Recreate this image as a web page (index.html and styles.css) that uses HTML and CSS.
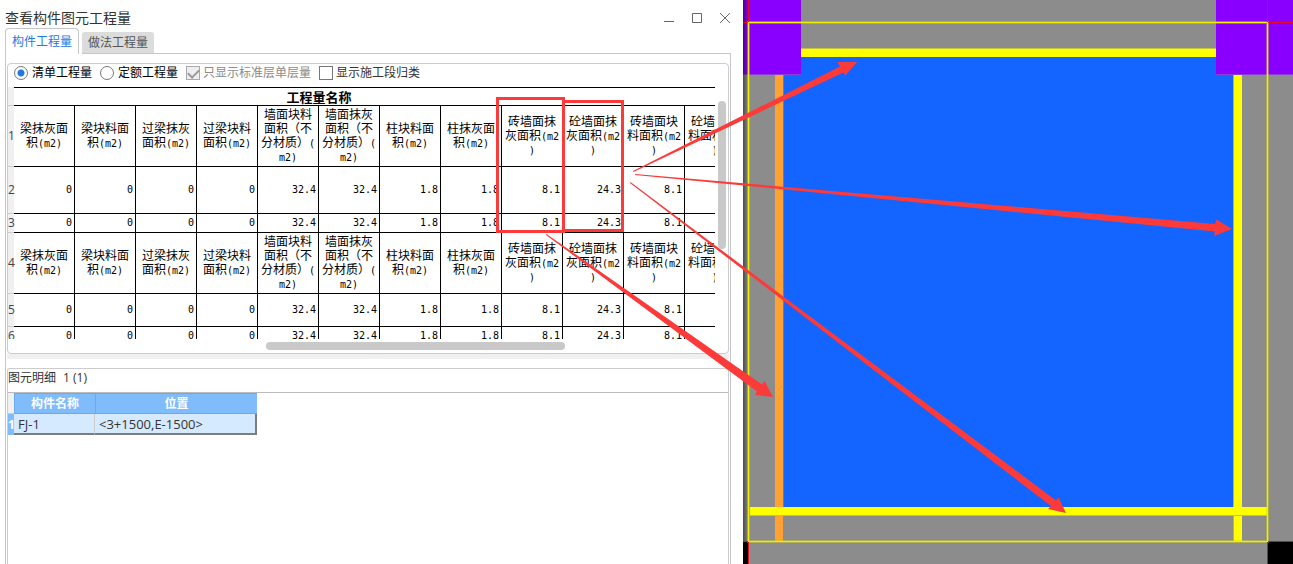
FILE: index.html
```html
<!DOCTYPE html>
<html lang="zh-CN">
<head>
<meta charset="utf-8">
<title>查看构件图元工程量</title>
<link rel="stylesheet" href="styles.css">
</head>
<body>
<main class="screen">
  <section class="dialog">
    <header class="titlebar">
      <h1 class="title">查看构件图元工程量</h1>
      <div class="window-buttons">
        <button class="window-button" aria-label="最小化"><svg width="12" height="12" viewBox="0 0 12 12"><path d="M1 9.500H11"/></svg></button>
        <button class="window-button" aria-label="最大化"><svg width="12" height="12" viewBox="0 0 12 12"><path d="M1.500 1.500H10.500V10.500H1.500Z"/></svg></button>
        <button class="window-button" aria-label="关闭"><svg width="12" height="12" viewBox="0 0 12 12"><path d="M1 1L11 11M11 1L1 11"/></svg></button>
      </div>
    </header>
    <nav class="tabs">
      <button class="tab tab-active">构件工程量</button>
      <button class="tab">做法工程量</button>
      <span class="tab-line"></span>
    </nav>
    <div class="panel">
      <div class="group">
        <div class="options">
          <label class="option option-on"><input type="radio" name="kind" checked>清单工程量</label>
          <label class="option option-on"><input type="radio" name="kind">定额工程量</label>
          <label class="option option-check option-off"><input type="checkbox" checked disabled>只显示标准层单层量</label>
          <label class="option option-check"><input type="checkbox">显示施工段归类</label>
        </div>
        <div class="grid">
          <div class="grid-view">
            <table class="quantities">
              <colgroup><col class="col-index"><col span="12" class="col-value"></colgroup>
              <tbody>
                <tr class="row-title"><th class="index"></th><th colspan="10" class="caption">工程量名称</th><th colspan="2" class="caption"></th></tr>
                <tr class="row-names">
                  <th class="index">1</th>
                  <th>梁抹灰面<br>积<span class="unit">(m2)</span></th>
                  <th>梁块料面<br>积<span class="unit">(m2)</span></th>
                  <th>过梁抹灰<br>面积<span class="unit">(m2)</span></th>
                  <th>过梁块料<br>面积<span class="unit">(m2)</span></th>
                  <th>墙面块料<br>面积（不<br>分材质）<span class="unit">(</span><br><span class="unit">m2)</span></th>
                  <th>墙面抹灰<br>面积（不<br>分材质）<span class="unit">(</span><br><span class="unit">m2)</span></th>
                  <th>柱块料面<br>积<span class="unit">(m2)</span></th>
                  <th>柱抹灰面<br>积<span class="unit">(m2)</span></th>
                  <th>砖墙面抹<br>灰面积<span class="unit">(m2</span><br><span class="unit">)</span></th>
                  <th>砼墙面抹<br>灰面积<span class="unit">(m2</span><br><span class="unit">)</span></th>
                  <th>砖墙面块<br>料面积<span class="unit">(m2</span><br><span class="unit">)</span></th>
                  <th>砼墙面块<br>料面积<span class="unit">(m2</span><br><span class="unit">)</span></th>
                </tr>
                <tr class="row-tall"><th class="index">2</th><td>0</td><td>0</td><td>0</td><td>0</td><td>32.4</td><td>32.4</td><td>1.8</td><td>1.8</td><td>8.1</td><td>24.3</td><td>8.1</td><td></td></tr>
                <tr class="row-short"><th class="index">3</th><td>0</td><td>0</td><td>0</td><td>0</td><td>32.4</td><td>32.4</td><td>1.8</td><td>1.8</td><td>8.1</td><td>24.3</td><td>8.1</td><td></td></tr>
                <tr class="row-names">
                  <th class="index">4</th>
                  <th>梁抹灰面<br>积<span class="unit">(m2)</span></th>
                  <th>梁块料面<br>积<span class="unit">(m2)</span></th>
                  <th>过梁抹灰<br>面积<span class="unit">(m2)</span></th>
                  <th>过梁块料<br>面积<span class="unit">(m2)</span></th>
                  <th>墙面块料<br>面积（不<br>分材质）<span class="unit">(</span><br><span class="unit">m2)</span></th>
                  <th>墙面抹灰<br>面积（不<br>分材质）<span class="unit">(</span><br><span class="unit">m2)</span></th>
                  <th>柱块料面<br>积<span class="unit">(m2)</span></th>
                  <th>柱抹灰面<br>积<span class="unit">(m2)</span></th>
                  <th>砖墙面抹<br>灰面积<span class="unit">(m2</span><br><span class="unit">)</span></th>
                  <th>砼墙面抹<br>灰面积<span class="unit">(m2</span><br><span class="unit">)</span></th>
                  <th>砖墙面块<br>料面积<span class="unit">(m2</span><br><span class="unit">)</span></th>
                  <th>砼墙面块<br>料面积<span class="unit">(m2</span><br><span class="unit">)</span></th>
                </tr>
                <tr class="row-medium"><th class="index">5</th><td>0</td><td>0</td><td>0</td><td>0</td><td>32.4</td><td>32.4</td><td>1.8</td><td>1.8</td><td>8.1</td><td>24.3</td><td>8.1</td><td></td></tr>
                <tr class="row-short"><th class="index">6</th><td>0</td><td>0</td><td>0</td><td>0</td><td>32.4</td><td>32.4</td><td>1.8</td><td>1.8</td><td>8.1</td><td>24.3</td><td>8.1</td><td></td></tr>
              </tbody>
            </table>
          </div>
          <div class="scroll-y"><div class="thumb-y"></div></div>
          <div class="scroll-x"><div class="thumb-x"></div></div>
        </div>
      </div>
      <div class="splitter"></div>
      <div class="details">
        <h2 class="details-title"><span>图元明细</span><span>1 (1)</span></h2>
        <table class="elements">
          <thead><tr><th class="corner"></th><th class="name">构件名称</th><th class="place">位置</th></tr></thead>
          <tbody><tr><th class="current">1</th><td>FJ-1</td><td>&lt;3+1500,E-1500&gt;</td></tr></tbody>
        </table>
      </div>
    </div>
  </section>
  <section class="plan">
    <svg class="plan-drawing" viewBox="743 0 550 564" preserveAspectRatio="none">
      <defs>
        <linearGradient id="edge" x1="0" x2="1" y1="0" y2="0"><stop offset="0" stop-color="#000" stop-opacity=".45"/><stop offset="1" stop-color="#000" stop-opacity="0"/></linearGradient>
      </defs>
      <rect x="743" y="0" width="550" height="564" fill="#8c8c8c"/>
      <rect x="783" y="57" width="451" height="451" fill="#1464ff"/>
      <rect x="775" y="74" width="8" height="467" fill="#ffa233"/>
      <rect x="783" y="74" width="1" height="433" fill="#5a7fb0"/>
      <rect x="801" y="49" width="415" height="8" fill="#ff0"/>
      <rect x="801" y="48" width="415" height="1" fill="#c4c43a"/>
      <rect x="1234" y="74" width="8" height="467" fill="#ff0"/>
      <rect x="1233" y="74" width="1" height="467" fill="#b0b070"/>
      <rect x="750" y="507" width="518" height="8" fill="#ff0"/>
      <rect x="750" y="515" width="518" height="1" fill="#c4c43a"/>
      <rect x="743" y="0" width="58" height="75" fill="#8a00ff"/>
      <rect x="1216" y="0" width="77" height="75" fill="#8a00ff"/>
      <path d="M743 74.500H801M1216 74.500H1293" stroke="#8b3fcf" fill="none"/>
      <rect x="743" y="0" width="6" height="542" fill="url(#edge)"/>
      <rect x="743" y="542" width="5" height="22" fill="#000"/>
      <rect x="1268" y="542" width="25" height="22" fill="#000"/>
      <rect x="748.500" y="22.500" width="519" height="519" fill="none" stroke="#d8d800" stroke-opacity=".45" stroke-width="3"/>
      <rect x="748.500" y="22.500" width="519" height="519" fill="none" stroke="#f0f000"/>
      <path d="M748.500 0V22M743 22.500H748M1267.500 0V22M1268 22.500H1293M743 541.500H748M748.500 542V564M1268 541.500H1293M1267.500 542V564" stroke="#e80a20" fill="none"/>
    </svg>
  </section>
  <svg class="markup" width="1293" height="564" viewBox="0 0 1293 564">
    <g fill="none" stroke="#fc3a3a" stroke-width="3">
      <path d="M497.500 98.500H563.500V231.500H497.500Z"/>
      <path d="M563.500 101.500H622.500V230.500H563.500"/>
    </g>
    <g fill="#fc3a3a">
      <path d="M633 171L840 66.500L837.500 62H857L845.500 75.500L843.500 72.500L633.500 172Z"/>
      <path d="M635 174L1215 224L1216.500 219.500L1232 229L1214 236L1215 231.500L635 175Z"/>
      <path d="M630.500 182L1056 500.500L1058.500 497.500L1066 513L1048 509L1051 506L630 183Z"/>
      <path d="M546.500 234L762 384.500L764.500 381L773 397L755 395L757 391.500L546 235Z"/>
    </g>
  </svg>
</main>
</body>
</html>
```
FILE: styles.css
```css
* { box-sizing: border-box; }

body {
  margin: 0;
  background: #fff;
  color: #333;
  font: 12px/16px "Open Sans", "Noto Sans CJK SC", sans-serif;
}

button, input, h1, h2 { margin: 0; font: inherit; }

.screen {
  position: relative;
  display: grid;
  grid-template-columns: minmax(0, 743fr) minmax(0, 550fr);
  min-height: 100vh;
  overflow: hidden;
}

.dialog {
  display: flex;
  flex-direction: column;
  padding: 8px 12px 0 5px;
}

.titlebar {
  display: flex;
  justify-content: space-between;
  height: 20px;
}

.title { font-size: 14px; line-height: 20px; font-weight: 400; }

.window-buttons { display: flex; gap: 16px; padding-top: 4px; }

.window-button {
  display: block;
  width: 12px;
  height: 12px;
  padding: 0;
  border: 0;
  background: none;
}

.window-button svg { display: block; fill: none; stroke: #666; }

.tabs { display: flex; align-items: flex-end; height: 26px; }

.tab {
  flex: none;
  width: 72px;
  height: 21px;
  margin: 0 0 1px 3px;
  padding: 0;
  border: 0;
  border-radius: 3px 3px 0 0;
  background: #dcdcdc;
  color: #555;
  line-height: 20px;
  box-shadow: 0 1px 0 #c3c6cc;
}

.tab-active {
  width: 74px;
  height: 26px;
  margin: 0;
  border: 1px solid #c3c6cc;
  border-bottom: 0;
  border-radius: 4px 4px 0 0;
  background: #fff;
  color: #1f7ae0;
  line-height: 25px;
  box-shadow: 3px 0 0 -2px #c3c6cc;
  box-shadow: none;
}

.tab-line { flex: 1; border-bottom: 1px solid #c3c6cc; }

.panel {
  flex: 1;
  display: flex;
  flex-direction: column;
  padding: 9px 1px 0 1px;
  border: 1px solid #c3c6cc;
  border-width: 0 1px;
}

.group {
  border: 1px solid #ccc;
  border-radius: 4px;
}

.options {
  display: flex;
  align-items: center;
  gap: 8px;
  height: 23px;
  padding: 0 0 5px 6px;
}

.option { display: flex; align-items: center; gap: 4px; line-height: 16px; }
.option-check { gap: 3px; }
.option-on { color: #000; }
.option-off { color: #8a8a8a; }

.option input {
  appearance: none;
  width: 14px;
  height: 14px;
  border: 1px solid #777;
  background: #fff;
}

.option input[type="radio"] { border-radius: 50%; }

.option input[type="radio"]:checked {
  background: radial-gradient(circle, #1f7ae0 3px, #fff 4px);
}

.option input:disabled {
  display: grid;
  place-items: center;
  border-color: #aaa;
  background: #eee;
}

.option input:disabled::after {
  content: "";
  width: 5px;
  height: 9px;
  margin-bottom: 3px;
  border: solid #999;
  border-width: 0 2px 2px 0;
  transform: rotate(45deg);
}

.grid {
  display: grid;
  grid-template: 252px 14px / minmax(0, 1fr) 13px;
}

.grid-view { overflow: hidden; }

.quantities {
  width: 738px;
  table-layout: fixed;
  border-collapse: separate;
  border-spacing: 0;
  color: #000;
  line-height: 14px;
}

.col-index { width: 6px; }
.col-value { width: 61px; }

.quantities th, .quantities td {
  padding: 0;
  border: 1px solid #000;
  border-width: 0 1px 1px 0;
  font-weight: 400;
  white-space: nowrap;
}

.quantities td {
  padding: 0 2px 1px 0;
  font-family: "DejaVu Sans Mono", monospace;
  font-size: 10px;
  text-align: right;
}

.quantities .index {
  border-color: #ccc;
  border-right: 0;
  background: #f0f0f0;
  color: #444;
}

.quantities .caption {
  border-top-width: 1px;
  border-right: 0;
  font-weight: 700;
  font-size: 13px;
}

.unit { font: 10px/10px "DejaVu Sans Mono", monospace; }

.row-title { height: 19px; }
.row-names { height: 61px; }
.row-tall { height: 47px; }
.row-short { height: 19px; }
.row-medium { height: 33px; }

.scroll-y { padding: 14px 0 0 3px; }
.thumb-y { width: 8px; height: 148px; border-radius: 4px; background: #c9c9c9; }
.scroll-x { grid-column: 1 / 3; padding: 3px 0 0 258px; }
.thumb-x { width: 299px; height: 8px; border-radius: 4px; background: #c9c9c9; }

.splitter { height: 5px; margin-bottom: 9px; background: #f0f0f0; }

.details {
  flex: 1;
  border: 1px solid #ccc;
  border-bottom: 0;
  border-radius: 3px 3px 0 0;
}

.details-title {
  display: flex;
  gap: 7px;
  height: 24px;
  border-bottom: 1px solid #bbb;
  font-weight: 400;
  line-height: 18px;
}

.elements {
  width: 249px;
  table-layout: fixed;
  border-spacing: 0;
}

.elements th, .elements td { height: 21px; padding: 0; line-height: 18px; }
.elements .corner { width: 6px; background: #f0f0f0; border-bottom: 1px solid #ccc; }
.elements .name, .elements .place {
  border: 1px solid #6aa9ee;
  border-width: 1px 0 1px 1px;
  background: #80bbfb;
  color: #fff;
}
.elements .name { width: 81px; }
.elements .current { background: #80bbfb; color: #fff; }
.elements td {
  padding-left: 4px;
  border-right: 1px solid #ccc;
  border-bottom: 2px solid #7d7d7d;
  background: #d6eaff;
  font-size: 13px;
}
.elements td:last-child { border-right: 2px solid #7d7d7d; }

.plan-drawing { display: block; width: 100%; height: 100%; }

.markup { position: absolute; top: 0; left: 0; pointer-events: none; }
```
